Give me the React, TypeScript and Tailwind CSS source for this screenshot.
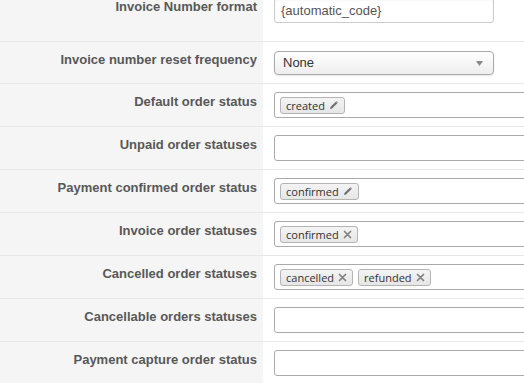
import React from "react";

type Tag = { label: string; icon: "edit" | "x" };

const Pencil = () => (
  <svg width="10" height="10" viewBox="0 0 10 10" className="ml-[4px]">
    <path d="M1 9 L1.5 7 L6.8 1.7 L8.3 3.2 L3 8.5 Z" fill="#6f6f6f" />
    <path d="M6.8 1.7 L7.6 0.9 L9.1 2.4 L8.3 3.2 Z" fill="#9a9a9a" />
  </svg>
);

const Cross = () => (
  <svg width="9" height="9" viewBox="0 0 9 9" className="ml-[4px]">
    <path d="M1.5 1.5 L7.5 7.5 M7.5 1.5 L1.5 7.5" stroke="#808080" strokeWidth="1.7" strokeLinecap="round" />
  </svg>
);

const TagChip = ({ tag }: { tag: Tag }) => (
  <span
    className="flex items-center h-[17px] px-[5px] rounded-[3px] border border-[#b4b4b4] bg-gradient-to-b from-[#f4f4f4] to-[#e6e6e6] text-[11px] text-[#333] leading-none"
    style={{ fontFamily: '"Open Sans", "Liberation Sans", sans-serif' }}
  >
    {tag.label}
    {tag.icon === "edit" ? <Pencil /> : <Cross />}
  </span>
);

const TagBox = ({ tags }: { tags: Tag[] }) => (
  <div className="h-[26px] w-[300px] border border-[#aaa] rounded-[3px] bg-white flex items-center gap-[5px] pl-[5px]">
    {tags.map((t) => (
      <TagChip key={t.label} tag={t} />
    ))}
  </div>
);

const Row = ({
  label,
  children,
  cellClass = "pt-[8px] pb-[8px]",
}: {
  label: string;
  children: React.ReactNode;
  cellClass?: string;
}) => (
  <div className="flex border-b border-[#e8e8e8]">
    <div className="w-[263px] shrink-0 bg-[#f5f5f5] text-right pr-[6px] pt-[10px] text-[13px] leading-[16px] font-bold text-[#585858]">
      {label}
    </div>
    <div className={"flex-1 bg-white pl-[11px] overflow-hidden " + cellClass}>{children}</div>
  </div>
);

export default function App() {
  return (
    <div
      className="w-[524px] h-[383px] overflow-hidden bg-white"
      style={{ fontFamily: '"Liberation Sans", Arial, sans-serif' }}
    >
      <div className="-mt-[11px]">
        <Row label="Invoice Number format" cellClass="pt-[9px] pb-[18px]">
          <div className="h-[25px] w-[220px] border border-[#ccc] rounded-[3px] bg-white shadow-[inset_0_1px_2px_rgba(0,0,0,0.08)] flex items-center pl-[6px] text-[13px] text-[#555]">
            {"{automatic_code}"}
          </div>
        </Row>
        <Row label="Invoice number reset frequency" cellClass="pt-[9px] pb-[8px]">
          <div className="h-[24px] w-[220px] border border-[#aaa] rounded-[4px] bg-gradient-to-b from-white to-[#eeeeee] shadow-[0_1px_2px_rgba(0,0,0,0.1)] flex items-center justify-between pl-[8px] pr-[10px] text-[13px] text-[#333]">
            <span>None</span>
            <svg width="7" height="5" viewBox="0 0 7 5">
              <path d="M0 0 L7 0 L3.5 5 Z" fill="#888" />
            </svg>
          </div>
        </Row>
        <Row label="Default order status">
          <TagBox tags={[{ label: "created", icon: "edit" }]} />
        </Row>
        <Row label="Unpaid order statuses">
          <TagBox tags={[]} />
        </Row>
        <Row label="Payment confirmed order status">
          <TagBox tags={[{ label: "confirmed", icon: "edit" }]} />
        </Row>
        <Row label="Invoice order statuses">
          <TagBox tags={[{ label: "confirmed", icon: "x" }]} />
        </Row>
        <Row label="Cancelled order statuses">
          <TagBox
            tags={[
              { label: "cancelled", icon: "x" },
              { label: "refunded", icon: "x" },
            ]}
          />
        </Row>
        <Row label="Cancellable orders statuses">
          <TagBox tags={[]} />
        </Row>
        <Row label="Payment capture order status">
          <TagBox tags={[]} />
        </Row>
      </div>
    </div>
  );
}
